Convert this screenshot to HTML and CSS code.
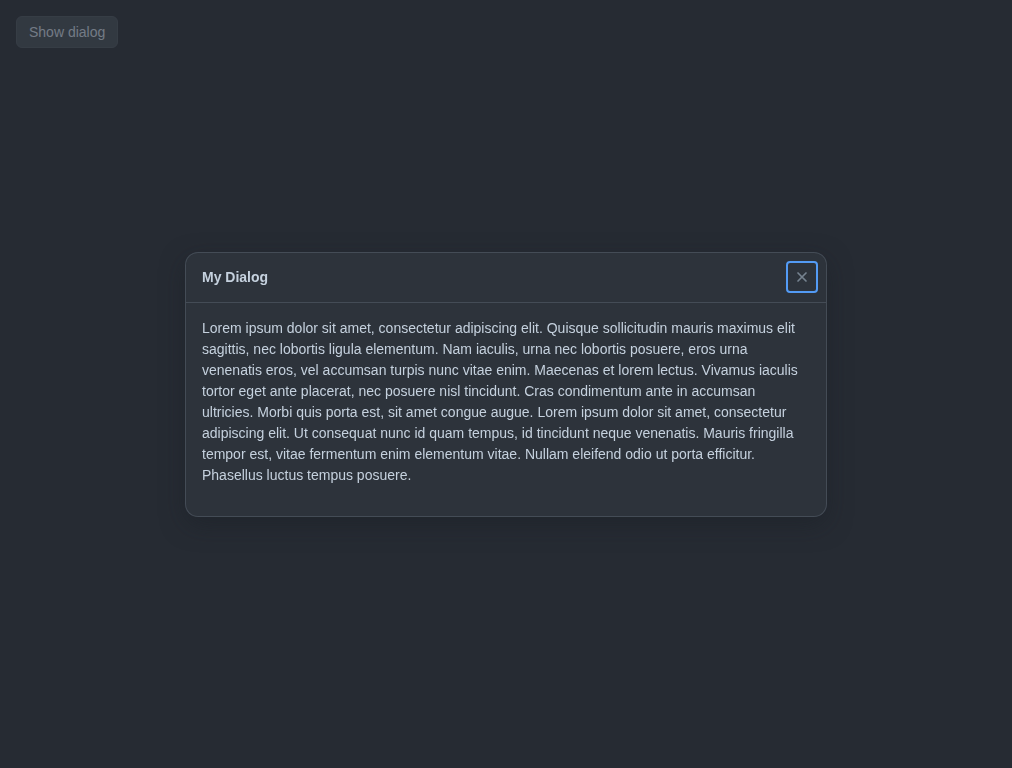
FILE: index.html
```html
<!DOCTYPE html>
<html lang="en">
<head>
<meta charset="utf-8">
<title>My Dialog</title>
<link rel="stylesheet" href="styles.css">
</head>
<body>
<main class="page">
  <button class="button" type="button">Show dialog</button>
</main>
<div class="backdrop">
  <div class="dialog" role="dialog" aria-modal="true" aria-labelledby="dialog-title">
    <header class="dialog-header">
      <h1 class="dialog-title" id="dialog-title">My Dialog</h1>
      <button class="close-button" type="button" aria-label="Close">
        <svg viewBox="0 0 16 16" width="16" height="16" fill="none" stroke="currentColor" stroke-width="1.7" stroke-linecap="round" aria-hidden="true"><path d="M4 4l8 8M12 4l-8 8"/></svg>
      </button>
    </header>
    <div class="dialog-body">
      <p class="dialog-text">Lorem ipsum dolor sit amet, consectetur adipiscing elit. Quisque sollicitudin mauris maximus elit sagittis, nec lobortis ligula elementum. Nam iaculis, urna nec lobortis posuere, eros urna venenatis eros, vel accumsan turpis nunc vitae enim. Maecenas et lorem lectus. Vivamus iaculis tortor eget ante placerat, nec posuere nisl tincidunt. Cras condimentum ante in accumsan ultricies. Morbi quis porta est, sit amet congue augue. Lorem ipsum dolor sit amet, consectetur adipiscing elit. Ut consequat nunc id quam tempus, id tincidunt neque venenatis. Mauris fringilla tempor est, vitae fermentum enim elementum vitae. Nullam eleifend odio ut porta efficitur. Phasellus luctus tempus posuere.</p>
    </div>
  </div>
</div>
</body>
</html>
```
FILE: styles.css
```css
* {
  box-sizing: border-box;
}

body {
  margin: 0;
  background: #1f232b;
  color: #c5d1de;
  font-family: "Liberation Sans", Arial, sans-serif;
  font-size: 14px;
  line-height: 21px;
}

.page {
  padding: 16px;
}

.button {
  display: block;
  height: 32px;
  padding: 0 12px;
  border: 1px solid #3f464f;
  border-radius: 6px;
  background: #373e47;
  color: #b9c2cf;
  font: inherit;
}

.backdrop {
  position: fixed;
  inset: 0;
  display: flex;
  align-items: center;
  justify-content: center;
  background: rgba(45, 51, 59, 0.5);
}

.dialog {
  width: 640px;
  max-width: calc(100% - 64px);
  border-radius: 12px;
  background: #2d333b;
  box-shadow: 0 0 0 1px #444c56, 0 8px 24px rgba(28, 33, 40, 0.6);
}

.dialog-header {
  display: flex;
  align-items: flex-start;
  justify-content: space-between;
  padding: 8px 8px 8px 16px;
  border-bottom: 1px solid #444c56;
}

.dialog-title {
  margin: 0;
  padding: 6px 0;
  font-size: 14px;
  font-weight: 700;
}

.close-button {
  display: grid;
  place-items: center;
  width: 32px;
  height: 32px;
  padding: 0;
  border: 0;
  border-radius: 4px;
  outline: 2px solid #539bf5;
  outline-offset: -2px;
  background: transparent;
  color: #768390;
}

.dialog-body {
  padding: 15px 16px;
}

.dialog-text {
  margin: 0 0 15px;
}
```
